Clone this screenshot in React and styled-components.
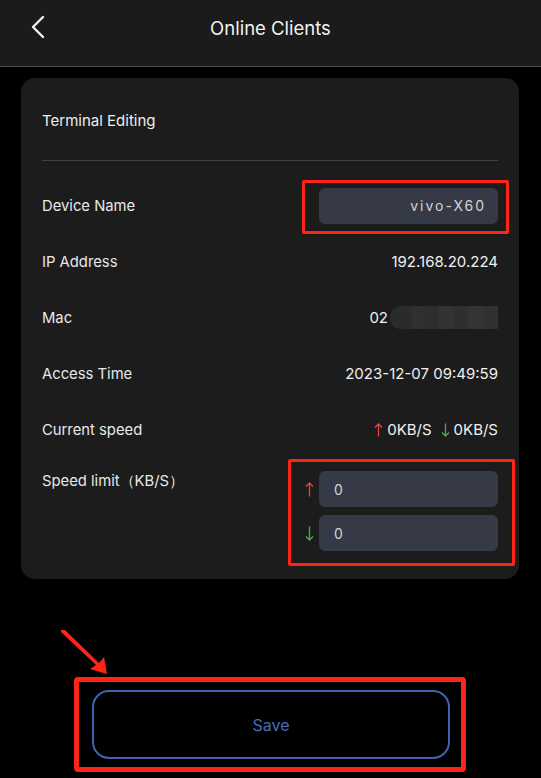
import styled, { createGlobalStyle } from "styled-components";

const GlobalStyle = createGlobalStyle`
  html, body {
    margin: 0;
    padding: 0;
    background: #000;
  }
  body {
    font-family: Inter, "Noto Sans", "Liberation Sans", sans-serif;
    color: #ececec;
  }
`;

const ANNOT = "#ff2418";
const UP = "#e0483e";
const DOWN = "#49b14a";

// thin arrow like the ones in the app
const ArrowIcon = ({ up, size = 15 }) => (
  <svg width="9" height={size} viewBox={`0 0 9 ${size}`}>
    {up ? (
      <path d={`M4.5 1 V${size - 0.5} M1 4.5 L4.5 1 L8 4.5`} fill="none" stroke={UP} strokeWidth="1.3" />
    ) : (
      <path d={`M4.5 0.5 V${size - 1} M1 ${size - 4.5} L4.5 ${size - 1} L8 ${size - 4.5}`} fill="none" stroke={DOWN} strokeWidth="1.3" />
    )}
  </svg>
);

export default function App() {
  return (
    <>
      <GlobalStyle />
      <Page>
        <Header>
          <BackButton aria-label="back">
            <svg width="14" height="24" viewBox="0 0 14 24">
              <path d="M12 2 L2 12 L12 22" fill="none" stroke="#f0f0f0" strokeWidth="2.4" strokeLinecap="round" strokeLinejoin="round" />
            </svg>
          </BackButton>
          <Title>Online Clients</Title>
        </Header>

        <Card>
          <CardTitle>Terminal Editing</CardTitle>
          <Divider />

          <Row>
            <Label>Device Name</Label>
            <Highlight $t={8} $r={11} $b={10} $l={17}>
              <Input $spaced $align="right" defaultValue="vivo-X60" />
            </Highlight>
          </Row>
          <Row>
            <Label>IP Address</Label>
            <Value>192.168.20.224</Value>
          </Row>
          <Row>
            <Label>Mac</Label>
            <Value>
              02<Blurred />
            </Value>
          </Row>
          <Row>
            <Label>Access Time</Label>
            <Value>2023-12-07 09:49:59</Value>
          </Row>
          <Row>
            <Label>Current speed</Label>
            <Value>
              <ArrowSlot><ArrowIcon up size={14} /></ArrowSlot>0KB/S
              <Gap />
              <ArrowSlot><ArrowIcon size={14} /></ArrowSlot>0KB/S
            </Value>
          </Row>
          <LimitRow>
            <Label>Speed limit（KB/S）</Label>
            <Highlight $t={12} $r={17} $b={15} $l={17}>
              <LimitList>
                <LimitItem>
                  <ArrowIcon up />
                  <Input defaultValue="0" />
                </LimitItem>
                <LimitItem>
                  <ArrowIcon />
                  <Input defaultValue="0" />
                </LimitItem>
              </LimitList>
            </Highlight>
          </LimitRow>
        </Card>

        <Footer>
          <Pointer width="50" height="46" viewBox="0 0 50 46">
            <polygon points="0,0 4,0 38,33 43,27 46,44 29,39 35,35 0,2" fill={ANNOT} />
          </Pointer>
          <SaveFrame>
            <SaveButton>Save</SaveButton>
          </SaveFrame>
        </Footer>
      </Page>
    </>
  );
}

const Page = styled.div`
  width: 541px;
  min-height: 778px;
  background: #000;
  display: flex;
  flex-direction: column;
`;

const Header = styled.header`
  height: 66px;
  background: #1b1b1b;
  border-bottom: 1px solid #4b4b4b;
  display: flex;
  align-items: center;
  justify-content: center;
  position: relative;
`;

const BackButton = styled.button`
  position: absolute;
  left: 31px;
  top: 15px;
  background: none;
  border: 0;
  padding: 0;
  display: flex;
`;

const Title = styled.h1`
  margin: 0 0 10px;
  font-size: 18.5px;
  font-weight: 400;
  color: #f2f2f2;
`;

const Card = styled.section`
  margin: 11px 22px 0 21px;
  background: #1c1c1c;
  border-radius: 14px;
  padding: 0 21px 28px;
  display: flex;
  flex-direction: column;
`;

const CardTitle = styled.div`
  height: 82px;
  display: flex;
  align-items: center;
  font-size: 15px;
  color: #ededed;
  padding-top: 2px;
  box-sizing: border-box;
`;

const Divider = styled.div`
  height: 1px;
  background: #3f424b;
  margin-bottom: 16px;
`;

const Row = styled.div`
  height: 56px;
  box-sizing: border-box;
  display: flex;
  align-items: center;
  justify-content: space-between;
  padding-top: 1px;
`;

const LimitRow = styled.div`
  display: flex;
  align-items: flex-start;
  justify-content: space-between;
  padding-top: 14px;
`;

const Label = styled.span`
  font-size: 14.8px;
  line-height: 20px;
  color: #e8e8e8;
`;

const Value = styled.span`
  font-size: 15px;
  color: #f0f0f0;
  display: flex;
  align-items: center;
  white-space: pre;
`;

const Gap = styled.span`
  width: 9px;
`;

const ArrowSlot = styled.span`
  display: flex;
  margin-right: 4px;
`;

const Blurred = styled.span`
  display: inline-block;
  width: 108px;
  height: 23px;
  margin-left: 2px;
  border-radius: 12px 0 0 12px;
  background:
    linear-gradient(90deg, #2b2b2b 0 20%, #303030 20% 32%, #2d2d2d 32% 45%, #333333 45% 58%, #2f2f2f 58% 72%, #343434 72% 86%, #313131 86% 100%);
`;

const Highlight = styled.div`
  position: relative;
  &::after {
    content: "";
    position: absolute;
    top: -${(p) => p.$t}px;
    right: -${(p) => p.$r}px;
    bottom: -${(p) => p.$b}px;
    left: -${(p) => p.$l}px;
    border: 3px solid ${ANNOT};
    border-radius: 2px;
    pointer-events: none;
  }
`;

const Input = styled.input`
  width: 179px;
  height: 36px;
  box-sizing: border-box;
  background: #363a46;
  border: 0;
  border-radius: 6px;
  color: #d4d4d4;
  font-family: Inter, "Noto Sans", sans-serif;
  font-size: 14px;
  padding: 0 ${(p) => (p.$align === "right" ? 12 : 15)}px;
  text-align: ${(p) => p.$align || "left"};
  letter-spacing: ${(p) => (p.$spaced ? "2px" : "0")};
  outline: none;
`;

const LimitList = styled.div`
  display: flex;
  flex-direction: column;
  gap: 8px;
`;

const LimitItem = styled.div`
  display: flex;
  align-items: center;
  gap: 5px;
`;

const Footer = styled.div`
  position: relative;
  display: flex;
  justify-content: center;
  padding-top: 111px;
`;

const Pointer = styled.svg`
  position: absolute;
  left: 61px;
  top: 51px;
`;

const SaveFrame = styled.div`
  padding: 8px 11px 8px 13px;
  border: 5px solid ${ANNOT};
  border-radius: 4px;
  margin-top: -13px;
  margin-left: -1px;
`;

const SaveButton = styled.button`
  width: 358px;
  height: 69px;
  background: transparent;
  border: 2px solid #3e63b1;
  border-radius: 17px;
  color: #4b6db8;
  font-family: Inter, "Noto Sans", sans-serif;
  font-size: 16px;
`;
